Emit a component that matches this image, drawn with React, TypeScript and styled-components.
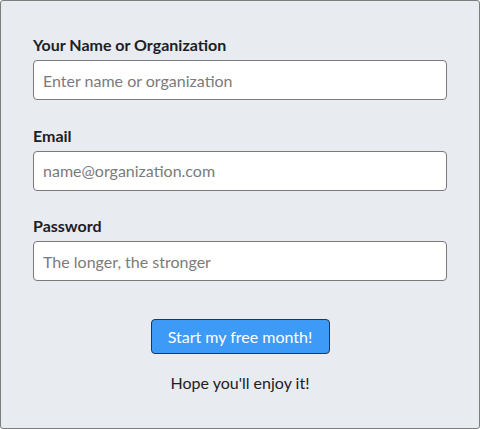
import React from "react";
import styled, { createGlobalStyle } from "styled-components";

const Global = createGlobalStyle`
  html, body { margin: 0; padding: 0; background: #ffffff; }
  * { box-sizing: border-box; }
`;

const Panel = styled.form`
  width: 480px;
  height: 429px;
  background: #e8ebf0;
  border: 1px solid #7d7d7d;
  border-radius: 3px;
  padding: 32px 32px 0 32px;
  font-family: "Lato", "Noto Sans", sans-serif;
  display: flex;
  flex-direction: column;
`;

const Field = styled.div`
  display: flex;
  flex-direction: column;
  gap: 3px;
  margin-bottom: 23.5px;
`;

const Label = styled.label`
  font-size: 16px;
  line-height: 24px;
  font-weight: 700;
  color: #1d2125;
`;

const Input = styled.input`
  height: 40px;
  width: 100%;
  border: 1px solid #7a7a7a;
  border-radius: 4px;
  background: #ffffff;
  padding: 0 9px;
  font-family: inherit;
  font-size: 16px;
  color: #1d2125;
  outline: none;
  &::placeholder { color: #7b7b7b; }
`;

const Actions = styled.div`
  display: flex;
  flex-direction: column;
  align-items: center;
  margin-top: 14.5px;
  gap: 17px;
`;

const Button = styled.button`
  width: 179px;
  height: 35px;
  background: #3d9bf7;
  border: 1px solid #2b3440;
  border-radius: 4px;
  color: #ffffff;
  font-family: inherit;
  font-size: 16px;
  font-weight: 400;
  cursor: pointer;
`;

const Note = styled.p`
  margin: 0;
  font-size: 16px;
  line-height: 24px;
  color: #1d2125;
`;

export default function App() {
  return (
    <>
      <Global />
      <Panel onSubmit={(e) => e.preventDefault()}>
        <Field>
          <Label htmlFor="name">Your Name or Organization</Label>
          <Input id="name" placeholder="Enter name or organization" />
        </Field>
        <Field>
          <Label htmlFor="email">Email</Label>
          <Input id="email" type="email" placeholder="name@organization.com" />
        </Field>
        <Field>
          <Label htmlFor="password">Password</Label>
          <Input id="password" type="password" placeholder="The longer, the stronger" />
        </Field>
        <Actions>
          <Button type="submit">Start my free month!</Button>
          <Note>Hope you'll enjoy it!</Note>
        </Actions>
      </Panel>
    </>
  );
}
